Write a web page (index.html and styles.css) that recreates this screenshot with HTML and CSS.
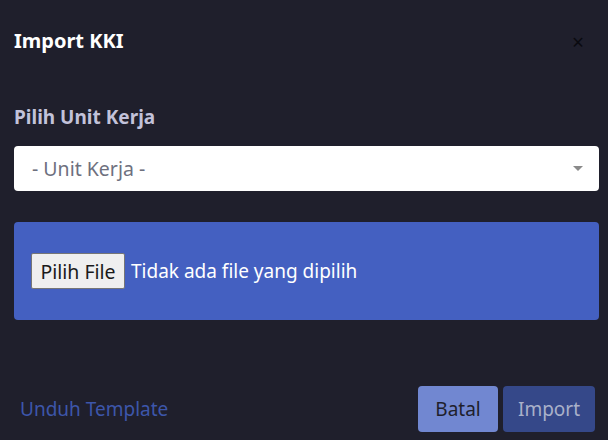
FILE: index.html
```html
<!DOCTYPE html>
<html lang="id">
<head>
<meta charset="utf-8">
<title>Import KKI</title>
<link rel="stylesheet" href="styles.css">
</head>
<body>
<div class="modal">
  <div class="modal-header">
    <h5 class="modal-title">Import KKI</h5>
    <span class="close">&times;</span>
  </div>
  <div class="modal-body">
    <label class="field-label">Pilih Unit Kerja</label>
    <div class="select">
      <span class="select-text">- Unit Kerja -</span>
      <span class="caret"></span>
    </div>
    <div class="upload-box">
      <span class="file-btn">Pilih File</span>
      <span class="file-name">Tidak ada file yang dipilih</span>
    </div>
  </div>
  <div class="modal-footer">
    <a class="link">Unduh Template</a>
    <div class="actions">
      <span class="btn btn-cancel">Batal</span>
      <span class="btn btn-import">Import</span>
    </div>
  </div>
</div>
</body>
</html>
```

FILE: styles.css
```css
html, body {
  margin: 0;
  padding: 0;
  background: #1f1f2c;
}
body {
  font-family: "Noto Sans", Lato, sans-serif;
  color: #ffffff;
  width: 608px;
  height: 440px;
  overflow: hidden;
  font-variant-ligatures: none;
}
.modal {
  padding: 0 9px 0 14px;
}
.modal-header {
  display: flex;
  justify-content: space-between;
  align-items: center;
  padding-top: 27px;
  height: 28px;
}
.modal-title {
  margin: 0;
  font-size: 20px;
  font-weight: 700;
  line-height: 28px;
  color: #ffffff;
}
.close {
  font-size: 21px;
  color: #0a0a10;
  margin-right: 15px;
  line-height: 20px;
  margin-top: 2px;
}
.modal-body {
  padding-top: 50px;
}
.field-label {
  display: block;
  font-size: 19px;
  font-weight: 700;
  color: #c2c2da;
  line-height: 24px;
  height: 24px;
  margin-bottom: 17px;
}
.select {
  height: 45px;
  background: #ffffff;
  border-radius: 4px;
  display: flex;
  align-items: center;
  justify-content: space-between;
  padding: 0 16px 0 18px;
  box-sizing: border-box;
}
.select-text {
  color: #6e707e;
  font-size: 19.5px;
}
.caret {
  width: 0;
  height: 0;
  border-left: 5px solid transparent;
  border-right: 5px solid transparent;
  border-top: 5px solid #8a8a8a;
}
.upload-box {
  margin-top: 31px;
  height: 98px;
  background: #4460c1;
  border-radius: 4px;
  display: flex;
  align-items: center;
  padding-left: 17px;
  box-sizing: border-box;
}
.file-btn {
  display: inline-flex;
  align-items: center;
  justify-content: center;
  width: 94px;
  height: 36px;
  box-sizing: border-box;
  background: #efefef;
  border: 1px solid #767676;
  border-radius: 2px;
  color: #1a1a1a;
  font-size: 19.5px;
}
.file-name {
  margin-left: 6px;
  font-size: 19px;
  color: #ffffff;
}
.modal-footer {
  display: flex;
  justify-content: space-between;
  align-items: center;
  margin-top: 66px;
  padding-left: 6px;
}
.link {
  color: #3d56aa;
  font-size: 19px;
}
.actions {
  display: flex;
  gap: 5px;
  margin-right: 4px;
}
.btn {
  display: inline-flex;
  align-items: center;
  justify-content: center;
  height: 46px;
  border-radius: 4px;
  font-size: 19px;
  box-sizing: border-box;
}
.btn-cancel {
  width: 80px;
  background: #7187d1;
  color: #1f1f2c;
}
.btn-import {
  width: 92px;
  background: #354889;
  color: #a9b1c9;
}
```
